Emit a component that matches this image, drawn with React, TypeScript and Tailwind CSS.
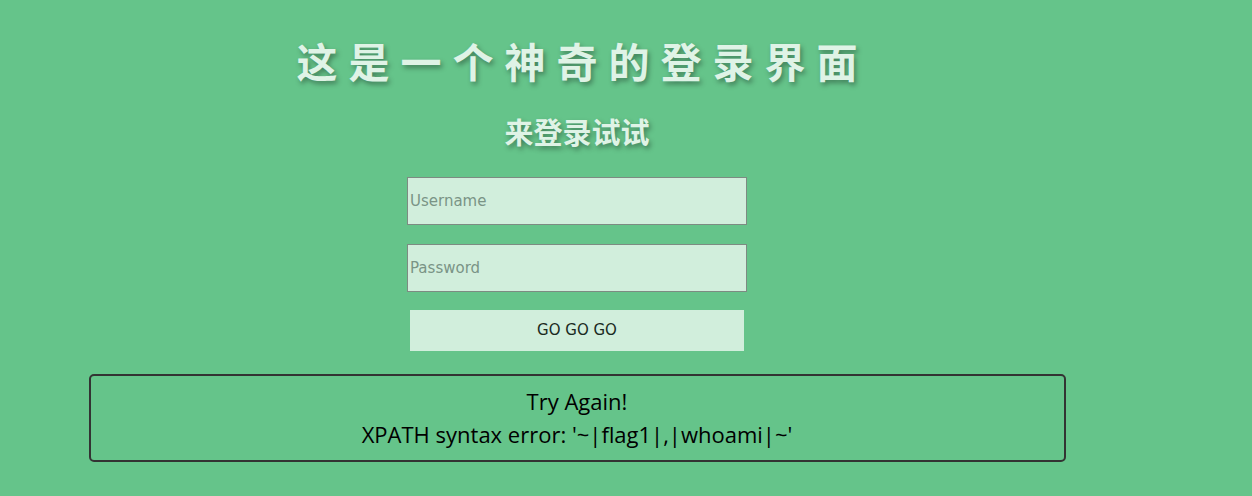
import React from 'react';

export default function App() {
  return (
    <div className="min-h-[496px] w-full bg-[#65c48a] overflow-hidden">
      <div className="w-[1154px] flex flex-col items-center pt-[34px]">
        {/* Title */}
        <h1
          className="text-[41px] leading-[52px] font-bold tracking-[11px] pl-[11px] text-[#dff3e6] [text-shadow:2px_3px_5px_rgba(0,0,0,0.35)]"
          style={{ fontFamily: '"Noto Sans CJK SC", sans-serif' }}
        >
          这是一个神奇的登录界面
        </h1>
        <h2
          className="mt-[25px] text-[29px] leading-[40px] font-bold text-[#dff3e6] [text-shadow:2px_3px_5px_rgba(0,0,0,0.35)]"
          style={{ fontFamily: '"Noto Sans CJK SC", sans-serif' }}
        >
          来登录试试
        </h2>

        {/* Form */}
        <form className="mt-[26px] flex flex-col items-center" style={{ fontFamily: '"DejaVu Sans", sans-serif' }}>
          <input
            type="text"
            placeholder="Username"
            className="w-[340px] h-[48px] px-[2px] bg-[#d1eedc] border border-[#7d8b82] text-[15px] placeholder:text-[#7a9486] outline-none"
          />
          <input
            type="password"
            placeholder="Password"
            className="mt-[19px] w-[340px] h-[48px] px-[2px] bg-[#d1eedc] border border-[#7d8b82] text-[15px] placeholder:text-[#7a9486] outline-none"
          />
          <button
            type="button"
            className="mt-[18px] w-[334px] h-[41px] bg-[#d1eedc] text-[15px] text-[#1a2a22]"
          >
            GO GO GO
          </button>
        </form>

        {/* Result box */}
        <div
          className="mt-[23px] w-[977px] h-[88px] border-2 border-[#333] rounded-[5px] flex flex-col items-center justify-center text-[22px] leading-[33px] text-black"
          style={{ fontFamily: '"Open Sans", sans-serif' }}
        >
          <div>Try Again!</div>
          <div>XPATH syntax error: '~|flag1|,|whoami|~'</div>
        </div>
      </div>
    </div>
  );
}
